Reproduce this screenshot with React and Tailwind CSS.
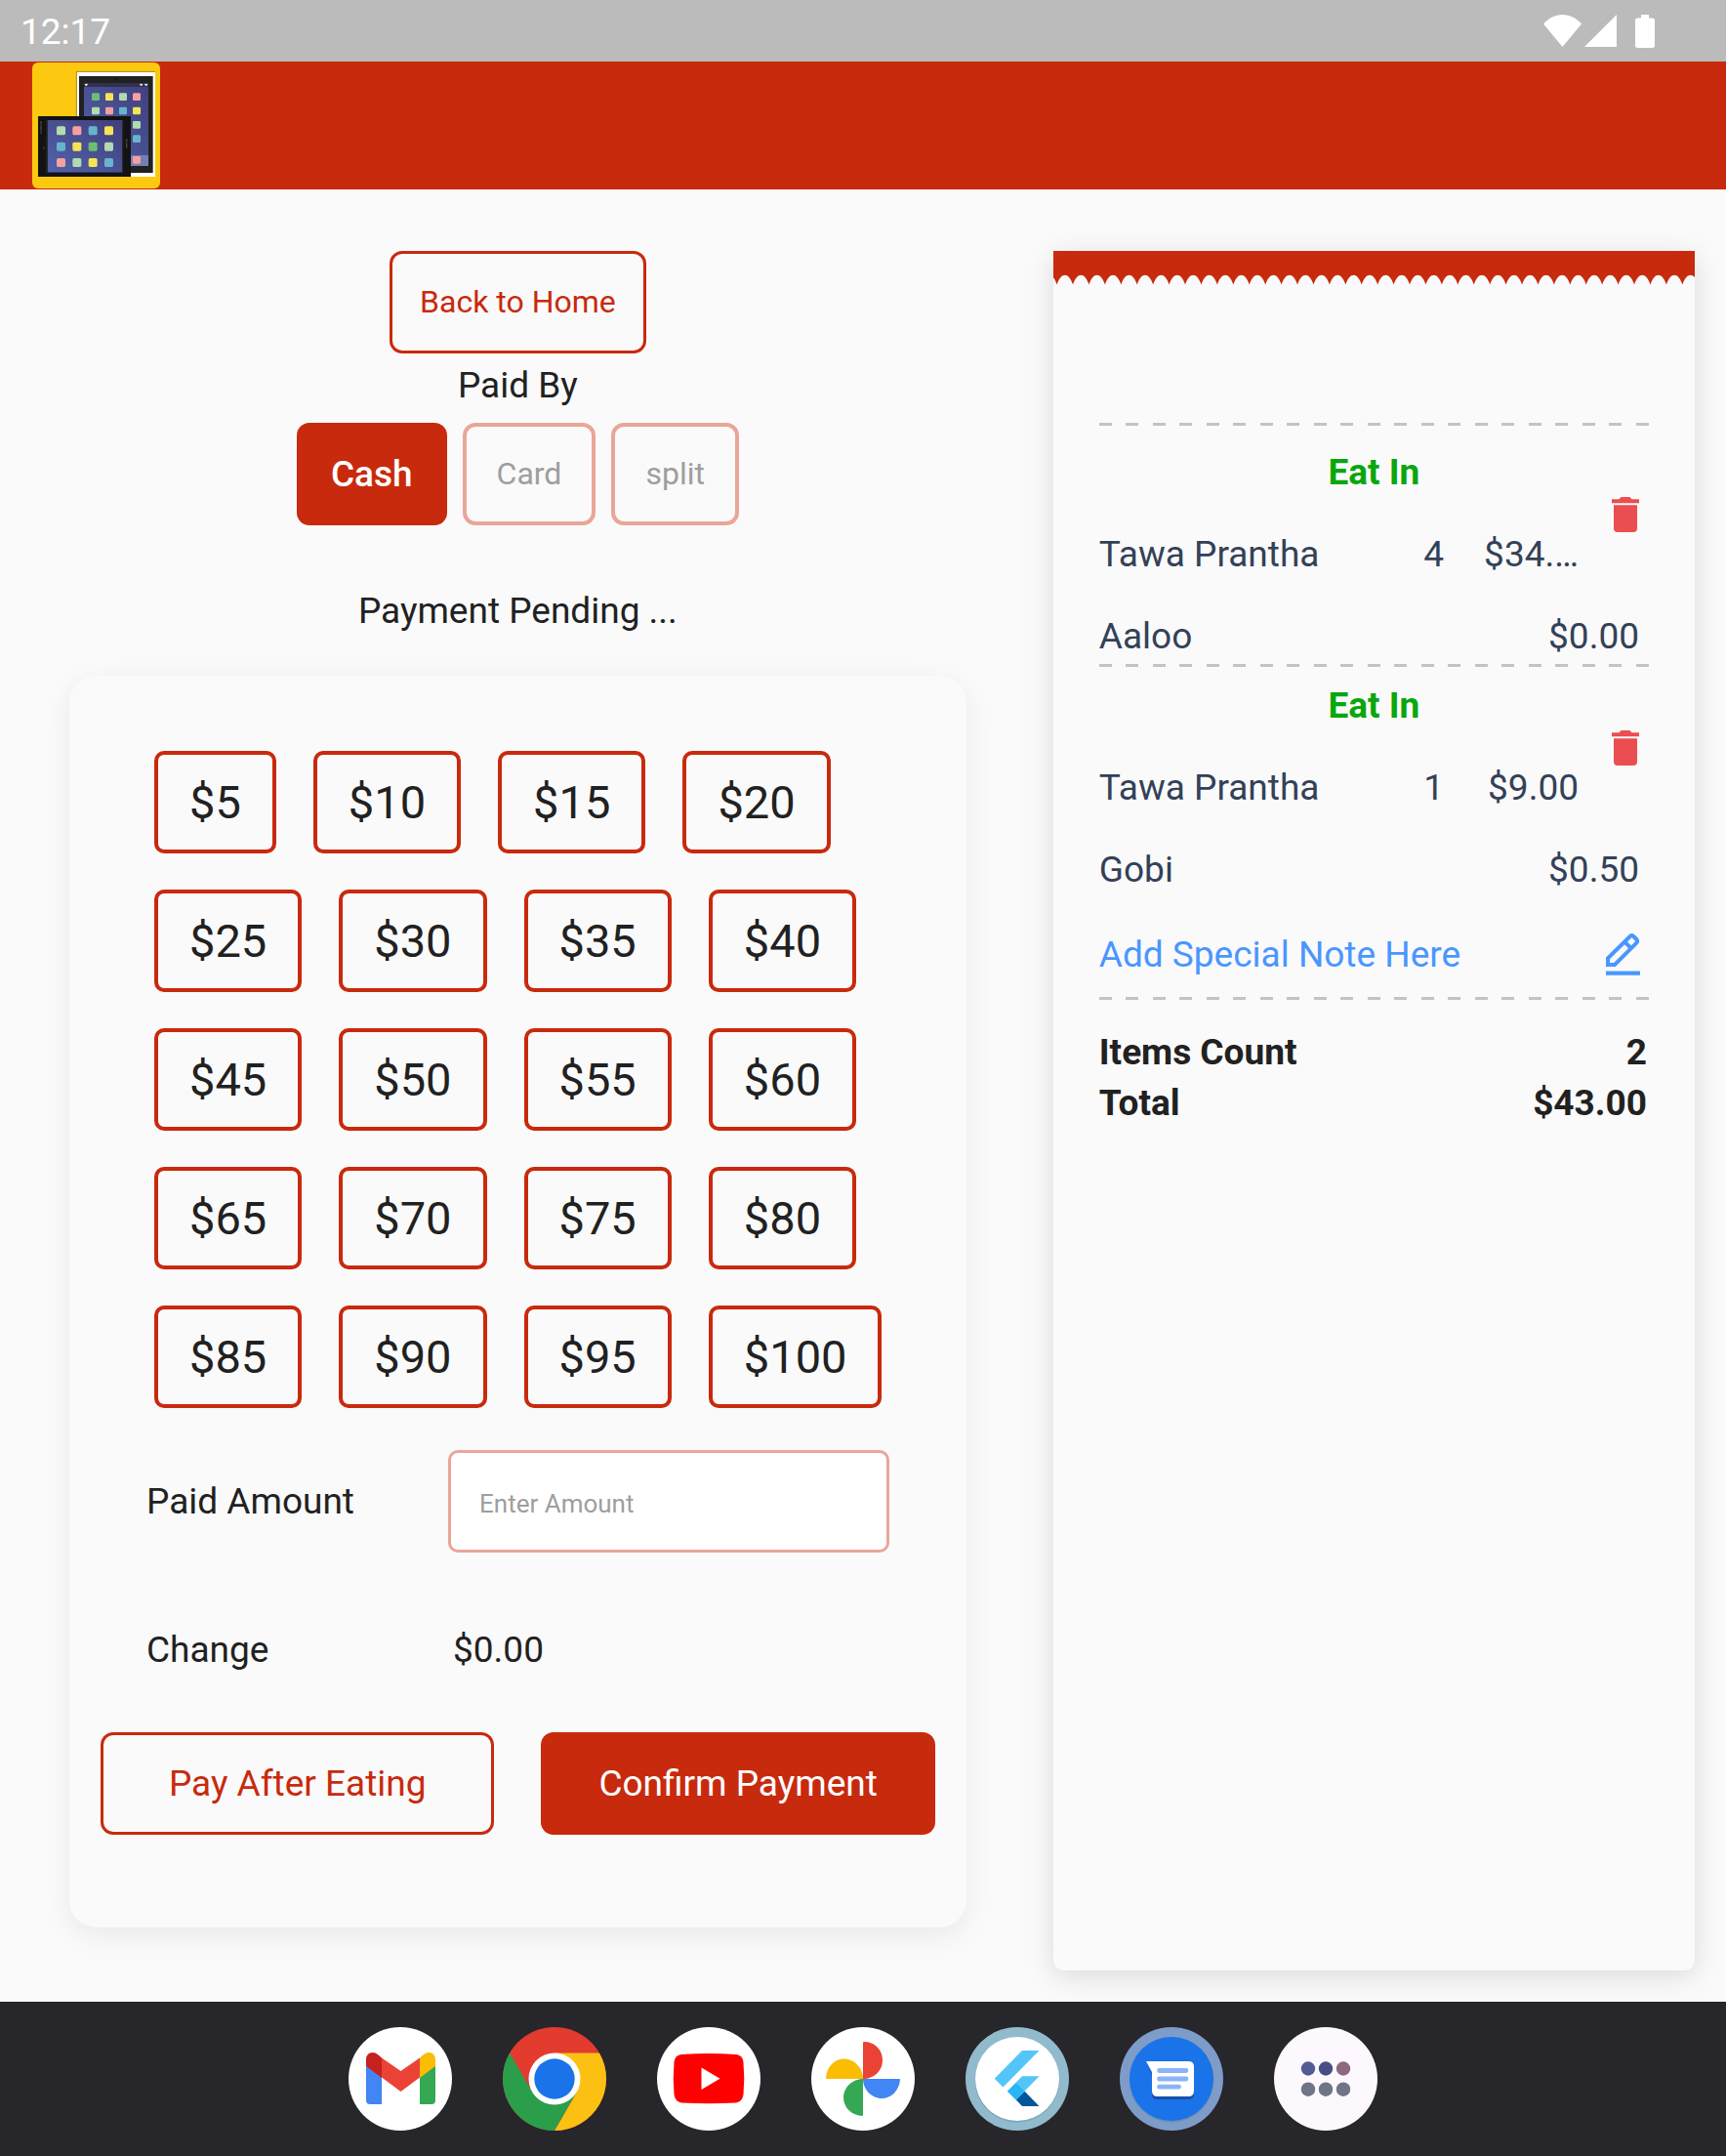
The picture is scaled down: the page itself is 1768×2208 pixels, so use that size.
import React, { useState } from "react";

const BILLS = [5, 10, 15, 20, 25, 30, 35, 40, 45, 50, 55, 60, 65, 70, 75, 80, 85, 90, 95, 100];

const ITEMS = [
  { name: "Tawa Prantha", qty: 4, price: "$34.…", extra: "Aaloo", extraPrice: "$0.00" },
  { name: "Tawa Prantha", qty: 1, price: "$9.00", extra: "Gobi", extraPrice: "$0.50" },
];

function StatusBar() {
  return (
    <div className="flex h-[63px] items-center justify-between bg-[#bbbbbb] pt-px pr-[73px] pl-[21px] text-white">
      <span className="text-[37px] leading-[43px]">12:17</span>
      <svg width="114" height="34" viewBox="0 0 114 34" fill="white" aria-hidden="true">
        <path d="M0 9.5C5.5 3.5 12 0 19.5 0S33.5 3.5 39 9.5L19.5 33Z" />
        <path d="M75 0V33H42Z" />
        <path d="M100 0h8v3.500h3.500a2.500 2.500 0 0 1 2.500 2.500V31.500a2.500 2.500 0 0 1-2.500 2.500h-15a2.500 2.500 0 0 1-2.500-2.500V6a2.500 2.500 0 0 1 2.500-2.500H100Z" />
      </svg>
    </div>
  );
}

const G = "#6bbf73";
const Y = "#f5e453";
const L = "#b2dbae";
const P = "#f79fa0";
const B = "#66b5cc";

function Logo() {
  const front = [
    [L, P, B, Y],
    [B, Y, G, L],
    [P, L, Y, B],
  ];
  const back = [
    [G, Y, L, P],
    [L, P, B, Y],
    [null, null, null, L],
    [null, null, null, B],
  ];
  return (
    <svg width="131" height="129" viewBox="0 0 393 387" role="img" aria-label="Store logo">
      <defs>
        <linearGradient id="screen" x1="0" y1="1" x2="1" y2="0">
          <stop offset="0" stopColor="#5162a8" />
          <stop offset="1" stopColor="#413f7d" />
        </linearGradient>
      </defs>
      <rect width="393" height="387" rx="18" fill="#fdc910" />
      <path d="M136 200V28H378" fill="none" stroke="#a98d2c" strokeWidth="3" />
      <rect x="138" y="30" width="240" height="321" fill="#fff" />
      <rect x="144" y="42" width="228" height="297" fill="#202121" />
      <rect x="369" y="42" width="3" height="297" fill="#6b6c70" />
      <rect x="159" y="63" width="198" height="255" fill="url(#screen)" />
      <rect x="159" y="63" width="198" height="12" fill="#33304f" />
      <circle cx="258" cy="50" r="3" fill="#111" />
      <path d="M162 67h8l-4 5zM331 67h8l-4 5zM346 67h8l-4 5z" fill="#fff" stroke="#fff" strokeWidth="2" />
      <rect x="159" y="285" width="198" height="33" fill="#7480b3" />
      {back.map((row, r) =>
        row.map((c, i) => c && <rect key={`${r}-${i}`} x={183 + i * 42} y={94 + r * 43} width="24" height="23" rx="4" fill={c} />)
      )}
      <rect x="309" y="288" width="24" height="23" rx="4" fill={P} />
      <rect x="18" y="165" width="285" height="186" fill="#131313" />
      <rect x="43" y="177" width="237" height="162" fill="#26262e" />
      <rect x="48" y="177" width="228" height="160" fill="url(#screen)" />
      <path d="M27 181v38M290 235v30" stroke="#555" strokeWidth="4" strokeDasharray="5 2" />
      <path d="M36 259v9" stroke="#444" strokeWidth="3" />
      {front.map((row, r) =>
        row.map((c, i) => <rect key={`${r}-${i}`} x={75 + i * 49} y={196 + r * 49} width="27" height="27" rx="5" fill={c} />)
      )}
    </svg>
  );
}

function Dashes() {
  return (
    <div className="flex h-[3px] justify-between" aria-hidden="true">
      {Array.from({ length: 21 }, (_, i) => (
        <span key={i} className="w-[13px] bg-[#bfc4c8]" />
      ))}
    </div>
  );
}

const SCALLOPS = Array.from({ length: 41 }, () => "c4.400 -13 12.050 -13 16.450 0").join("");

function ScallopEdge() {
  return (
    <svg className="block h-[35px] w-full" viewBox="0 0 658 35" preserveAspectRatio="none" aria-hidden="true">
      <path d={`M-12.850 0V34.400${SCALLOPS}V0Z`} fill="#c82a0d" />
    </svg>
  );
}

function TrashIcon() {
  return (
    <svg width="28" height="36" viewBox="0 0 28 36" fill="#ea4e50" aria-hidden="true">
      <path d="M0 2.200H7.500C8.500 .5 9.500 0 11 0H17C18.500 0 19.500 .5 20.500 2.200H28V6.300H0Z" />
      <path d="M2 8.200H26V32A4 4 0 0 1 22 36H6A4 4 0 0 1 2 32Z" />
    </svg>
  );
}

function PenIcon() {
  return (
    <svg width="35" height="43" viewBox="0 0 105 129" fill="none" stroke="#4a96ff" aria-hidden="true">
      <path d="M6 96V76L74 9Q79.500 4 85 9L94 18Q99 23.500 94 29L27 96Z" strokeWidth="12" strokeLinejoin="miter" />
      <path d="M59 27L76 44" strokeWidth="12" />
      <path d="M0 122H105" strokeWidth="13" />
    </svg>
  );
}

function ReceiptItem({ item }) {
  return (
    <li className="relative text-[#334158]">
      <p className="text-center font-bold text-[#0aa70c]">Eat In</p>
      <button type="button" aria-label={`Remove ${item.name}`} className="absolute top-[47px] right-[10px]">
        <TrashIcon />
      </button>
      <div className="mt-[41px] grid grid-cols-[1fr_auto_138px] pr-[72px]">
        <span>{item.name}</span>
        <span>{item.qty}</span>
        <span className="text-right">{item.price}</span>
      </div>
      <div className="mt-[41px] flex justify-between pr-[10px]">
        <span>{item.extra}</span>
        <span>{item.extraPrice}</span>
      </div>
    </li>
  );
}

function Receipt() {
  return (
    <aside className="mt-[63px] mr-8 mb-8 ml-[18px] flex-1 rounded-b-[10px] bg-[#fafafa] shadow-[0_6px_28px_rgba(0,0,0,0.13)]">
      <ScallopEdge />
      <div className="px-[47px] pt-[141px] text-[37px] leading-[43px]">
        <Dashes />
        <ul className="pt-[26px]">
          <ReceiptItem item={ITEMS[0]} />
          <li className="pt-[7px] pb-[18px]" aria-hidden="true">
            <Dashes />
          </li>
          <ReceiptItem item={ITEMS[1]} />
        </ul>
        <button type="button" className="mt-[43px] flex h-[45px] w-full items-center justify-between pr-[9px] text-[#4a96ff]">
          <span>Add Special Note Here</span>
          <PenIcon />
        </button>
        <div className="pt-[21px] pb-8">
          <Dashes />
        </div>
        <dl className="grid grid-cols-[1fr_auto] gap-y-[9px] pr-[2px] font-bold text-[#212121]">
          <dt>Items Count</dt>
          <dd className="text-right">2</dd>
          <dt>Total</dt>
          <dd className="text-right">$43.00</dd>
        </dl>
      </div>
    </aside>
  );
}

function Payment() {
  const [amount, setAmount] = useState("");
  return (
    <section className="flex flex-col items-center pt-[63px] text-[37px] leading-[43px] text-[#212121]">
      <button type="button" className="h-[105px] rounded-[13px] border-[3px] border-[#c82a0d] px-7 text-[32px] text-[#c82a0d]">
        Back to Home
      </button>
      <h2 className="mt-[11px]">Paid By</h2>
      <div className="mt-[17px] flex gap-4">
        <button type="button" className="h-[105px] rounded-[13px] bg-[#c82a0d] px-[35px] font-medium text-white">
          Cash
        </button>
        <button type="button" className="h-[105px] rounded-[13px] border-4 border-[#e9a698] px-[31px] text-[32px] text-[#9e9e9e]">
          Card
        </button>
        <button type="button" className="h-[105px] rounded-[13px] border-4 border-[#e9a698] px-[31px] text-[32px] text-[#9e9e9e]">
          split
        </button>
      </div>
      <p className="mt-[66px]">Payment Pending ...</p>

      <div className="mt-[45px] self-stretch px-[71px]">
        <div className="rounded-[28px] bg-[#fafafa] px-8 pt-[77px] pb-[95px] shadow-[0_8px_28px_rgba(0,0,0,0.07)]">
          <div className="flex flex-wrap gap-x-[38px] gap-y-[37px] pr-8 pl-[55px] text-[47px]">
            {BILLS.map((b) => (
              <button
                key={b}
                type="button"
                onClick={() => setAmount(String(b))}
                className="h-[105px] rounded-[10px] border-4 border-[#c82a0d] px-8"
              >
                ${b}
              </button>
            ))}
          </div>
          <div className="mt-[43px] grid grid-cols-[309px_1fr] items-center pr-[47px] pl-[47px]">
            <label htmlFor="paid-amount">Paid Amount</label>
            <input
              id="paid-amount"
              value={amount}
              onChange={(e) => setAmount(e.target.value)}
              placeholder="Enter Amount"
              className="h-[105px] w-full rounded-[10px] border-[3px] border-[#e9a698] bg-white px-[29px] pt-1 text-[26px] outline-none placeholder:text-[#9e9e9e]"
            />
            <span className="mt-[78px]">Change</span>
            <output htmlFor="paid-amount" className="mt-[78px] pl-[5px]">$0.00</output>
          </div>
          <div className="mt-[63px] grid grid-cols-2 gap-12">
            <button type="button" className="h-[105px] rounded-[13px] border-[3px] border-[#c82a0d] text-[#c82a0d]">
              Pay After Eating
            </button>
            <button type="button" className="h-[105px] rounded-[13px] bg-[#c82a0d] text-white">
              Confirm Payment
            </button>
          </div>
        </div>
      </div>
    </section>
  );
}

function AppButton({ label, children }) {
  return (
    <button type="button" aria-label={label}>
      <svg width="106" height="106" viewBox="0 0 106 106" aria-hidden="true">
        {children}
      </svg>
    </button>
  );
}

function Dock() {
  return (
    <nav className="flex h-[158px] items-center justify-center gap-[52px] bg-[#26262b]">
      <AppButton label="Gmail">
        <circle cx="53" cy="53" r="53" fill="#fff" />
        <path d="M18 39L34 51V79H22Q18 79 18 75Z" fill="#4285f4" />
        <path d="M89 39L73 51V79H85Q89 79 89 75Z" fill="#34a853" />
        <path d="M34 31.500L53.500 45L73 31.500V51.500L53.500 66L34 51.500Z" fill="#ea4335" />
        <path d="M18 40V33C18 26.500 25 23.500 30.500 28.500L34 31.500V52Z" fill="#c5221f" />
        <path d="M89 40V33C89 26.500 82 23.500 76.500 28.500L73 31.500V52Z" fill="#fbbc04" />
      </AppButton>
      <AppButton label="Chrome">
        <circle cx="53" cy="53" r="53" fill="#e33b2e" />
        <path d="M53 26.500H98.900A53 53 0 0 1 53 106L75.950 66.250Z" fill="#fcc013" />
        <path d="M75.950 66.250L53 106A53 53 0 0 1 7.100 26.500L30.050 66.250Z" fill="#2b9e4b" />
        <circle cx="53" cy="53" r="26.500" fill="#fff" />
        <circle cx="53" cy="53" r="20.700" fill="#1a73e8" />
      </AppButton>
      <AppButton label="YouTube">
        <circle cx="53" cy="53" r="53" fill="#fff" />
        <path d="M25 28Q53 26 81 28Q87.500 28.500 88.500 36Q90 52.500 88.500 69Q87.500 76.500 81 77.500Q53 79 25 77.500Q18.500 76.500 17.500 69Q16 52.500 17.500 36Q18.500 28.500 25 28Z" fill="#f00" />
        <path d="M45.500 41.500L64.500 52.700L45.500 64Z" fill="#fff" />
      </AppButton>
      <AppButton label="Photos">
        <circle cx="53" cy="53" r="53" fill="#fff" />
        <path d="M53 53V15.500Q53 15 54 15C65 15 73 23 73 34S64 53 53 53Z" fill="#ea4335" />
        <path d="M53 53H90Q91 53 91 54C90 65 82 73 72 73S53 64 53 53Z" fill="#4285f4" />
        <path d="M53 53V89.500Q53 91 51.500 91C41 90 33 82 33 72S42 53 53 53Z" fill="#34a853" />
        <path d="M53 53H16.500Q15 53 15 51.500C16 40 24 32.500 34 32.500S53 42 53 53Z" fill="#fbbc04" />
      </AppButton>
      <AppButton label="Flutter app">
        <circle cx="53" cy="53" r="53" fill="#92bacd" />
        <circle cx="53" cy="54" r="43.500" fill="#7fa6b9" />
        <circle cx="53" cy="53" r="43" fill="#fff" />
        <path d="M58 24H75.500L38.500 61.500L29.700 52.700Z" fill="#54c5f8" />
        <path d="M58 50.300H75.500L51.800 74.500L42.900 65.700Z" fill="#54c5f8" />
        <path d="M51.800 74.500L60.600 65.700L75.500 81H58Z" fill="#01579b" />
        <path d="M42.900 65.700L51.800 56.900L60.600 65.700L51.800 74.500Z" fill="#29b6f6" />
      </AppButton>
      <AppButton label="Messages">
        <circle cx="53" cy="53" r="53" fill="#7e9cc8" />
        <circle cx="53" cy="54" r="43.500" fill="#6d8dbd" />
        <circle cx="53" cy="53" r="43" fill="#1a73e8" />
        <path d="M27 38L33 49V69Q33 74 38 74H71Q76 74 76 69V60H40Z" fill="#1650aa" />
        <path d="M27 35H70.500Q76 35 76 40.500V65Q76 71 70.500 71H38.500Q33 71 33 65V46Z" fill="#fff" />
        <path d="M40.500 44.500H68M40.500 53H68M40.500 61.200H60.500" stroke="#8ab4f8" strokeWidth="4.800" strokeLinecap="round" />
      </AppButton>
      <AppButton label="All apps">
        <circle cx="53" cy="53" r="53" fill="#fdf8fd" />
        <circle cx="35" cy="42.500" r="7.200" fill="#535a94" />
        <circle cx="53" cy="42.500" r="7.200" fill="#464e85" />
        <circle cx="71" cy="42.500" r="7.200" fill="#8e6780" />
        <circle cx="35" cy="63.700" r="7.200" fill="#707487" />
        <circle cx="53" cy="63.700" r="7.200" fill="#707487" />
        <circle cx="71" cy="63.700" r="7.200" fill="#707487" />
      </AppButton>
    </nav>
  );
}

export default function App() {
  return (
    <div className="flex min-h-screen flex-col bg-[#fafafa] font-['Roboto',sans-serif]">
      <StatusBar />
      <header className="flex h-[131px] items-center bg-[#c82a0d] pl-[33px]">
        <Logo />
      </header>
      <main className="grid flex-1 grid-cols-[3fr_2fr]">
        <Payment />
        <div className="flex min-w-0">
          <Receipt />
        </div>
      </main>
      <Dock />
    </div>
  );
}
